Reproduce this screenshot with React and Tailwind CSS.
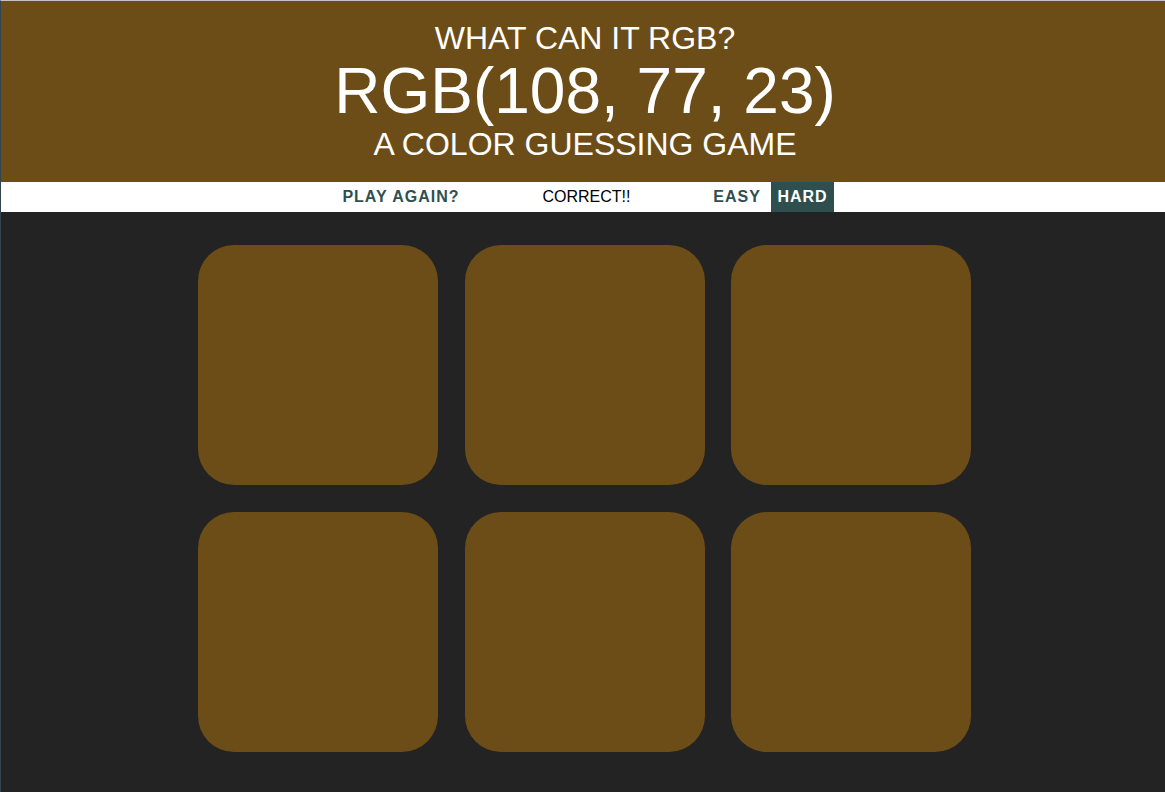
import React, { useState } from 'react';

const target = 'rgb(108, 77, 23)';

export default function App() {
    const [mode, setMode] = useState('hard');
    const squares = mode === 'hard' ? 6 : 3;

    return (
        <div
            className="min-h-screen bg-[#232323] border-l border-l-[#34454f] border-t border-t-[#c4c4c4]"
            style={{ fontFamily: '"Liberation Sans", Arial, sans-serif' }}
        >
            <h1 className="bg-[#6c4d17] text-white text-center uppercase font-normal py-5 pl-1">
                <span className="block text-[32px] leading-[1.1]">What can it RGB?</span>
                <span className="block text-[64px] leading-[1.1]">{target}</span>
                <span className="block text-[32px] leading-[1.1]">A color guessing game</span>
            </h1>

            <div className="bg-white h-[30px] flex justify-center items-stretch pl-1 text-base">
                <button className="px-[6px] h-full uppercase font-bold tracking-[1px] text-[#2f4f4f]">
                    Play again?
                </button>
                <span className="w-[4.45px]" />
                <span className="w-[233px] flex items-center justify-center text-black">CORRECT!!</span>
                <span className="w-[4.45px]" />
                <button
                    onClick={() => setMode('easy')}
                    className={
                        mode === 'easy'
                            ? 'px-[6px] h-full uppercase font-bold tracking-[1px] bg-[#2f4f4f] text-white'
                            : 'px-[6px] h-full uppercase font-bold tracking-[1px] text-[#2f4f4f]'
                    }
                >
                    Easy
                </button>
                <span className="w-[4.45px]" />
                <button
                    onClick={() => setMode('hard')}
                    className={
                        mode === 'hard'
                            ? 'px-[6px] h-full uppercase font-bold tracking-[1px] bg-[#2f4f4f] text-white'
                            : 'px-[6px] h-full uppercase font-bold tracking-[1px] text-[#2f4f4f]'
                    }
                >
                    Hard
                </button>
            </div>

            <div className="pl-1">
                <div className="w-[800px] mx-auto mt-5 flex flex-wrap">
                    {Array.from({ length: squares }).map((_, i) => (
                        <div key={i} className="w-[240px] h-[240px] m-[13.3px] rounded-[36px] bg-[#6c4d17]" />
                    ))}
                </div>
            </div>
        </div>
    );
}
